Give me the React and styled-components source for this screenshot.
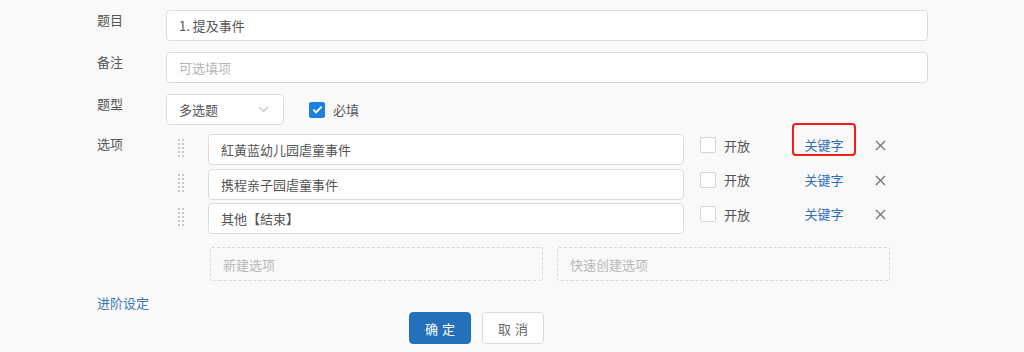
import React from 'react';
import styled, { createGlobalStyle } from 'styled-components';

const GlobalStyle = createGlobalStyle`
  html, body {
    margin: 0;
    padding: 0;
    background: #f9f9f9;
    font-family: "Noto Sans CJK SC", "Noto Sans", sans-serif;
    font-size: 13px;
    color: #555;
  }
`;

const Page = styled.div`
  width: 1024px;
  height: 352px;
  box-sizing: border-box;
  padding: 10px 96px 0 97px;
  overflow: hidden;
`;

const Row = styled.div`
  display: flex;
  align-items: flex-start;
  margin-bottom: ${p => p.gap ?? 11}px;
`;

const Label = styled.div`
  width: 69px;
  flex: none;
  line-height: 20px;
  color: #555;
`;

const Input = styled.div`
  flex: 1;
  height: 31px;
  box-sizing: border-box;
  border: 1px solid #dcdcdc;
  border-radius: 4px;
  background: #fff;
  padding: 0 12px;
  display: flex;
  align-items: center;
  color: ${p => (p.placeholder ? '#b5b5b5' : '#555')};
`;

const Select = styled(Input)`
  flex: none;
  width: 118px;
  justify-content: space-between;
  padding-right: 14px;
`;

const Check = styled.span`
  width: 16px;
  height: 16px;
  box-sizing: border-box;
  border-radius: 2px;
  flex: none;
  display: inline-flex;
  align-items: center;
  justify-content: center;
  background: ${p => (p.on ? '#1d7fe1' : '#fff')};
  border: 1px solid ${p => (p.on ? '#1d7fe1' : '#d5d5d5')};
`;

const CheckLabel = styled.label`
  display: flex;
  align-items: center;
  gap: 8px;
  height: ${p => p.h || 31}px;
  color: #555;
  margin-left: ${p => p.ml || 0}px;
`;

const Options = styled.div`
  display: flex;
  flex-direction: column;
  gap: 3.5px;
`;

const OptionRow = styled.div`
  display: flex;
  align-items: flex-start;
  height: 31px;
`;

const Handle = styled.div`
  width: 42px;
  flex: none;
  padding: 5px 0 0 12px;
  box-sizing: border-box;
  display: grid;
  grid-template-columns: 2px 2px;
  grid-auto-rows: 2px;
  column-gap: 2px;
  row-gap: 2px;
  span {
    background: #c8c8c8;
  }
`;

const OptionInput = styled(Input)`
  flex: none;
  width: 476px;
`;

const Tools = styled.div`
  display: flex;
  align-items: flex-start;
  padding-top: 1px;
`;

const Keyword = styled.div`
  margin: -12px 0 0 42px;
  width: 64px;
  height: 33px;
  box-sizing: border-box;
  padding-top: 10px;
  line-height: 19px;
  text-align: center;
  color: #2f6fb6;
  border: 2px solid ${p => (p.hl ? '#f01d1d' : 'transparent')};
  border-radius: 4px;
`;

const Close = styled.div`
  margin: 5px 0 0 19px;
  display: flex;
`;

const NewRow = styled.div`
  display: flex;
  gap: 14px;
  margin: 13px 0 0 113px;
`;

const Dashed = styled.div`
  width: 333px;
  height: 34px;
  box-sizing: border-box;
  border: 1px dashed #d8d8d8;
  border-radius: 2px;
  padding: 0 12px;
  display: flex;
  align-items: center;
  color: #b8b8b8;
`;

const Advanced = styled.div`
  color: #3a78bd;
  margin-top: 14px;
  line-height: 16px;
`;

const Buttons = styled.div`
  display: flex;
  gap: 11px;
  margin: 1px 0 0 312px;
`;

const Button = styled.button`
  width: 62px;
  height: 32px;
  border-radius: 4px;
  font-family: inherit;
  font-size: 13px;
  letter-spacing: 4px;
  padding: 0 0 0 4px;
  border: 1px solid ${p => (p.primary ? '#2470bb' : '#dcdcdc')};
  background: ${p => (p.primary ? '#2470bb' : '#fff')};
  color: ${p => (p.primary ? '#fff' : '#666')};
`;

const Chevron = () => (
  <svg width="11" height="7" viewBox="0 0 11 7">
    <path d="M1 1l4.5 4.5L10 1" fill="none" stroke="#c4c4c4" strokeWidth="1.1" />
  </svg>
);

const Tick = () => (
  <svg width="11" height="9" viewBox="0 0 11 9">
    <path d="M1.3 4.6l2.8 2.8L9.7 1.6" fill="none" stroke="#fff" strokeWidth="2" />
  </svg>
);

const Cross = () => (
  <svg width="11" height="11" viewBox="0 0 11 11">
    <path d="M1 1l9 9M10 1l-9 9" stroke="#777" strokeWidth="1.4" />
  </svg>
);

const options = ['紅黃蓝幼儿园虐童事件', '携程亲子园虐童事件', '其他【結束】'];

export default function App() {
  return (
    <>
      <GlobalStyle />
      <Page>
        <Row>
          <Label>题目</Label>
          <Input>1. 提及事件</Input>
        </Row>
        <Row>
          <Label>备注</Label>
          <Input placeholder>可选填项</Input>
        </Row>
        <Row gap={9}>
          <Label>题型</Label>
          <Select>
            多选题
            <Chevron />
          </Select>
          <CheckLabel ml={25}>
            <Check on>
              <Tick />
            </Check>
            必填
          </CheckLabel>
        </Row>
        <Row gap={0}>
          <Label>选项</Label>
          <Options>
            {options.map((o, i) => (
              <OptionRow key={o}>
                <Handle>
                  {Array.from({ length: 10 }).map((_, j) => (
                    <span key={j} />
                  ))}
                </Handle>
                <OptionInput>{o}</OptionInput>
                <Tools>
                  <CheckLabel ml={16} h={20}>
                    <Check />
                    开放
                  </CheckLabel>
                  <Keyword hl={i === 0}>关键字</Keyword>
                  <Close>
                    <Cross />
                  </Close>
                </Tools>
              </OptionRow>
            ))}
          </Options>
        </Row>
        <NewRow>
          <Dashed>新建选项</Dashed>
          <Dashed>快速创建选项</Dashed>
        </NewRow>
        <Advanced>进阶设定</Advanced>
        <Buttons>
          <Button primary>确定</Button>
          <Button>取消</Button>
        </Buttons>
      </Page>
    </>
  );
}
